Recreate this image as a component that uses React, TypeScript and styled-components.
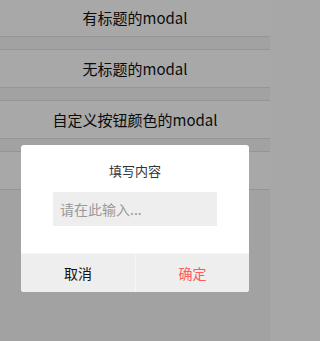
import React, { useState } from "react";
import styled, { createGlobalStyle } from "styled-components";

const GlobalStyle = createGlobalStyle`
  html, body {
    margin: 0;
    padding: 0;
    background: #a7a7a7;
    font-family: "Noto Sans CJK SC", "Noto Sans", sans-serif;
    overflow: hidden;
  }
`;

const Screen = styled.div`
  position: relative;
  width: 270px;
  height: 341px;
  background: #f6f6f6;
  overflow: hidden;
`;

const ButtonList = styled.div`
  display: flex;
  flex-direction: column;
  gap: 12px;
  margin-top: -2px;
`;

const DemoButton = styled.button`
  display: block;
  width: 100%;
  height: 39px;
  padding: 0;
  background: #fff;
  border: none;
  border-top: 1px solid #e2e2e2;
  border-bottom: 1px solid #e2e2e2;
  color: #111;
  font-family: inherit;
  font-size: 15px;
  line-height: 37px;
  cursor: pointer;
`;

const Overlay = styled.div`
  position: absolute;
  inset: 0;
  background: rgba(0, 0, 0, 0.34);
  display: flex;
  justify-content: center;
  align-items: flex-start;
  padding-top: 145px;
`;

const Dialog = styled.div`
  width: 228px;
  background: #fff;
  border-radius: 3px;
  overflow: hidden;
`;

const DialogBody = styled.div`
  display: flex;
  flex-direction: column;
  align-items: center;
  padding: 17px 0 27px;
`;

const DialogTitle = styled.div`
  font-size: 13px;
  line-height: 18px;
  color: #333;
  margin-bottom: 12px;
`;

const Field = styled.input`
  box-sizing: border-box;
  width: 164px;
  height: 34px;
  padding: 0 7px;
  border: none;
  outline: none;
  background: #eeeeee;
  font-family: inherit;
  font-size: 14px;
  color: #333;

  &::placeholder {
    color: #999;
  }
`;

const DialogFooter = styled.div`
  display: grid;
  grid-template-columns: 1fr 1fr;
  height: 38px;
  border-top: 1px solid #f6f6f6;
  background: #eeeeee;
`;

const FooterButton = styled.button<{ $primary?: boolean }>`
  padding: 0;
  border: none;
  background: transparent;
  font-family: inherit;
  font-size: 14px;
  color: ${({ $primary }) => ($primary ? "#ff5b5b" : "#111")};
  border-left: ${({ $primary }) => ($primary ? "1px solid #f6f6f6" : "none")};
  cursor: pointer;
`;

export default function App() {
  const [open, setOpen] = useState(true);
  const [value, setValue] = useState("");

  return (
    <>
      <GlobalStyle />
      <Screen>
        <ButtonList>
          <DemoButton onClick={() => setOpen(true)}>有标题的modal</DemoButton>
          <DemoButton onClick={() => setOpen(true)}>无标题的modal</DemoButton>
          <DemoButton onClick={() => setOpen(true)}>
            自定义按钮颜色的modal
          </DemoButton>
          {/* label of this one is hidden behind the dialog */}
          <DemoButton aria-label="输入框modal" onClick={() => setOpen(true)} />
        </ButtonList>

        {open && (
          <Overlay>
            <Dialog>
              <DialogBody>
                <DialogTitle>填写内容</DialogTitle>
                <Field
                  placeholder="请在此输入..."
                  value={value}
                  onChange={(e) => setValue(e.target.value)}
                />
              </DialogBody>
              <DialogFooter>
                <FooterButton onClick={() => setOpen(false)}>取消</FooterButton>
                <FooterButton $primary onClick={() => setOpen(false)}>
                  确定
                </FooterButton>
              </DialogFooter>
            </Dialog>
          </Overlay>
        )}
      </Screen>
    </>
  );
}
